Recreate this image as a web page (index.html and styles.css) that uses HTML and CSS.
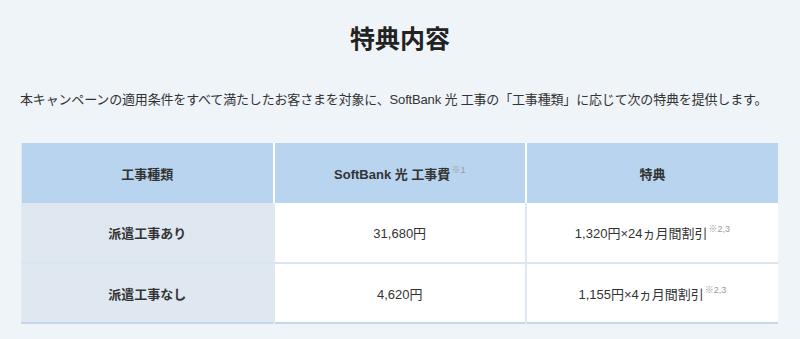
FILE: index.html
```html
<!DOCTYPE html>
<html lang="ja">
<head>
<meta charset="utf-8">
<link rel="stylesheet" href="styles.css">
</head>
<body>
<main class="section">
  <h2 class="title">特典内容</h2>
  <p class="lead">本キャンペーンの適用条件をすべて満たしたお客さまを対象に、SoftBank 光 工事の「工事種類」に応じて次の特典を提供します。</p>
  <table class="benefit">
    <thead>
      <tr>
        <th>工事種類</th>
        <th>SoftBank 光 工事費<sup class="note">※1</sup></th>
        <th>特典</th>
      </tr>
    </thead>
    <tbody>
      <tr>
        <th class="rowhead">派遣工事あり</th>
        <td>31,680円</td>
        <td>1,320円×24ヵ月間割引<sup class="note">※2,3</sup></td>
      </tr>
      <tr>
        <th class="rowhead">派遣工事なし</th>
        <td>4,620円</td>
        <td>1,155円×4ヵ月間割引<sup class="note">※2,3</sup></td>
      </tr>
    </tbody>
  </table>
</main>
</body>
</html>
```
FILE: styles.css
```css
html, body {
  margin: 0;
  padding: 0;
  background: #eff4f8;
}
body {
  font-family: "Liberation Sans", "Noto Sans CJK JP", sans-serif;
  color: #333;
}
.section {
  padding: 19px 21px 0 21px;
}
.title {
  margin: 0;
  text-align: center;
  font-family: "Noto Sans CJK JP", sans-serif;
  font-size: 25px;
  font-weight: 700;
  line-height: 36px;
  color: #222;
}
.lead {
  margin: 35px 0 0 -1px;
  font-size: 13px;
  line-height: 20px;
  letter-spacing: -0.17px;
}
.benefit {
  margin-top: 33px;
  width: 757px;
  border-collapse: collapse;
  table-layout: fixed;
  font-size: 13px;
  border-left: 1px solid #e2ebf4;
}
.benefit thead th {
  background: #b9d4ee;
  height: 60px;
  font-weight: 700;
  border-left: 2px solid #fff;
  padding: 0;
}
.benefit thead th:first-child {
  border-left: none;
}
.benefit tbody tr {
  border-top: 2px solid #dbe5f0;
}
.benefit tbody tr:first-child {
  border-top: none;
}
.benefit tbody tr:last-child {
  border-bottom: 2px solid #c5d7ea;
}
.benefit tbody th,
.benefit tbody td {
  height: 58px;
  padding: 0;
  text-align: center;
}
.benefit tbody tr:first-child th,
.benefit tbody tr:first-child td {
  height: 59px;
}
.benefit tbody td {
  background: #fff;
  border-left: 2px solid #dfe8f2;
}
.rowhead {
  background: #dfe7f1;
  font-weight: 700;
}
.note {
  font-size: 9px;
  color: #999;
  font-weight: 400;
  vertical-align: 6px;
  line-height: 0;
  margin-left: 1px;
}
```
